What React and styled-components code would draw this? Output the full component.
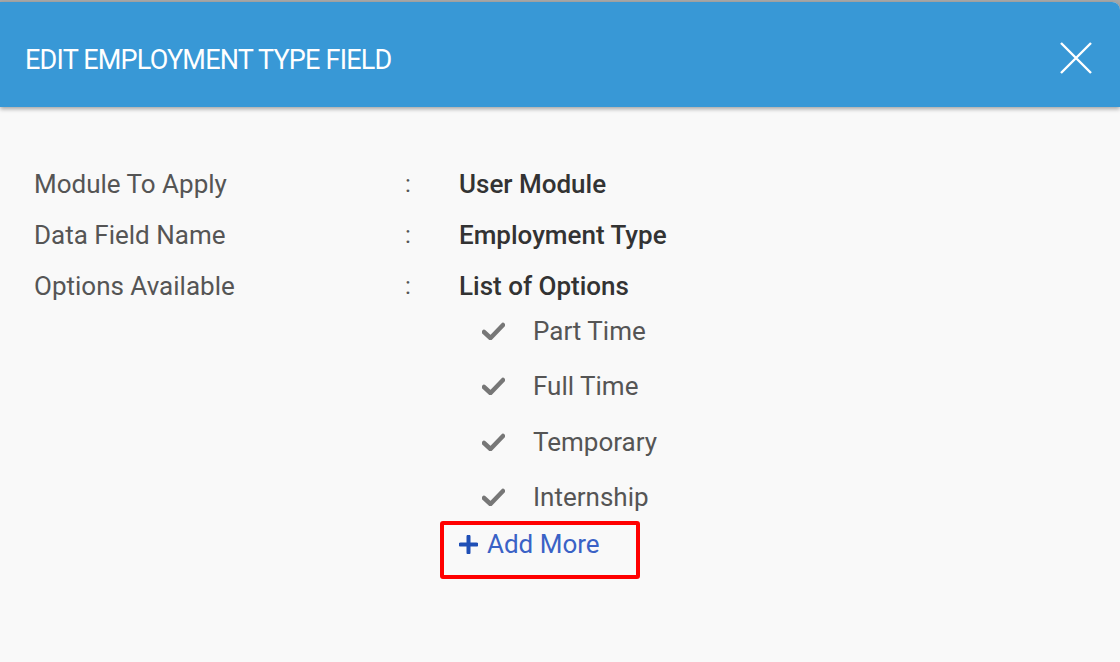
import React from "react";
import styled, { createGlobalStyle } from "styled-components";

const Global = createGlobalStyle`
  html, body { margin: 0; padding: 0; }
  body {
    background: #a8a8a8;
    font-family: Roboto, "Noto Sans", sans-serif;
    height: 662px;
    overflow: hidden;
  }
`;

const Modal = styled.div`
  margin-top: 2px;
  height: 660px;
  background: #f9f9f9;
  border-top-right-radius: 8px;
  display: flex;
  flex-direction: column;
`;

const Header = styled.header`
  height: 105px;
  flex: none;
  background: #3898d6;
  border-top-right-radius: 8px;
  box-shadow: 0 2px 4px rgba(0, 0, 0, 0.35);
  display: flex;
  align-items: center;
  justify-content: space-between;
  padding: 0 28px 0 25px;
  position: relative;
  z-index: 1;
`;

const Title = styled.h1`
  margin: 10px 0 0;
  color: #fff;
  font-family: Roboto, sans-serif;
  font-weight: 400;
  font-size: 27px;
  letter-spacing: -0.8px;
`;

const Close = styled.button`
  border: 0;
  background: none;
  padding: 0;
  margin-top: 6px;
  width: 32px;
  height: 32px;
  cursor: pointer;
  display: flex;
`;

const Body = styled.div`
  padding: 62px 34px 0;
  display: grid;
  grid-template-columns: 371px 54px 1fr;
  grid-auto-rows: 51px;
  align-items: start;
`;

const Label = styled.div`
  color: #555;
  font-size: 26px;
  line-height: 30px;
`;

const Colon = styled.div`
  color: #555;
  font-size: 24px;
  line-height: 30px;
`;

const Value = styled.div`
  color: #333;
  font-size: 26px;
  line-height: 30px;
  font-weight: 500;
`;

const ValueCell = styled.div`
  grid-column: 3;
  display: flex;
  flex-direction: column;
`;

const OptionList = styled.ul`
  list-style: none;
  margin: 0;
  padding: 2px 0 0 23px;
  display: flex;
  flex-direction: column;
`;

const Option = styled.li`
  height: 55.5px;
  display: flex;
  align-items: center;
  gap: 28px;
  color: #555;
  font-size: 26px;
`;

const AddMore = styled.button`
  margin: -4px 0 0 -19px;
  width: 200px;
  height: 58px;
  flex: none;
  box-sizing: border-box;
  border: 4px solid #ff0000;
  border-radius: 3px;
  background: none;
  padding: 0 0 12px 15px;
  display: flex;
  align-items: center;
  gap: 9px;
  color: #3a62c6;
  font-family: Roboto, sans-serif;
  font-size: 26px;
  cursor: pointer;
`;

const Check = () => (
  <svg width="23" height="18" viewBox="0 0 23 18">
    <path d="M2 10 L8.5 16 L21 3" fill="none" stroke="#777" strokeWidth="4.5" strokeLinecap="round" strokeLinejoin="round" />
  </svg>
);

const Plus = () => (
  <svg width="19" height="19" viewBox="0 0 19 19">
    <path d="M9.5 1.5 V17.5 M1.5 9.5 H17.5" stroke="#1f4fb6" strokeWidth="4" strokeLinecap="round" />
  </svg>
);

const rows = [
  ["Module To Apply", "User Module"],
  ["Data Field Name", "Employment Type"],
  ["Options Available", "List of Options"],
];

const options = ["Part Time", "Full Time", "Temporary", "Internship"];

export default function App() {
  return (
    <>
      <Global />
      <Modal>
        <Header>
          <Title>EDIT EMPLOYMENT TYPE FIELD</Title>
          <Close aria-label="Close">
            <svg width="32" height="32" viewBox="0 0 32 32">
              <path d="M1 1 L31 31 M31 1 L1 31" stroke="#fff" strokeWidth="2.4" />
            </svg>
          </Close>
        </Header>
        <Body>
          {rows.map(([l, v], i) => (
            <React.Fragment key={l}>
              <Label>{l}</Label>
              <Colon>:</Colon>
              {i < 2 ? (
                <Value>{v}</Value>
              ) : (
                <ValueCell>
                  <Value>{v}</Value>
                  <OptionList>
                    {options.map((o) => (
                      <Option key={o}>
                        <Check />
                        {o}
                      </Option>
                    ))}
                  </OptionList>
                  <AddMore>
                    <Plus />
                    Add More
                  </AddMore>
                </ValueCell>
              )}
            </React.Fragment>
          ))}
        </Body>
      </Modal>
    </>
  );
}
